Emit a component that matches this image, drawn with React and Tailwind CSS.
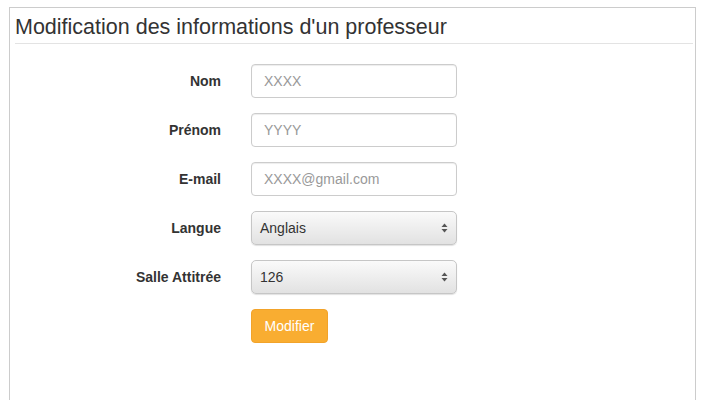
import React from "react";

function Arrows() {
  return (
    <svg width="7" height="12" viewBox="0 0 7 12" className="shrink-0">
      <path d="M3.5 1.5 L6.5 5 L0.5 5 Z" fill="#555" />
      <path d="M3.5 10.5 L6.5 7 L0.5 7 Z" fill="#555" />
    </svg>
  );
}

function Row({ label, children }) {
  return (
    <div className="flex items-center">
      <label className="w-[211px] text-right text-[14px] font-bold text-[#333]">{label}</label>
      <div className="ml-[30px]">{children}</div>
    </div>
  );
}

function TextInput({ placeholder }) {
  return (
    <input
      type="text"
      placeholder={placeholder}
      className="block h-[34px] w-[206px] rounded-[4px] border border-[#ccc] bg-white px-[12px] text-[14px] text-[#555] shadow-[inset_0_1px_1px_rgba(0,0,0,0.075)] outline-none placeholder:text-[#999]"
    />
  );
}

function FakeSelect({ value }) {
  return (
    <div className="flex h-[34px] w-[206px] items-center justify-between rounded-[5px] border border-[#c6c6c6] bg-linear-to-b from-[#fafafa] to-[#e2e2e2] pl-[8px] pr-[8px] text-[14px] text-[#333] shadow-[0_1px_1px_rgba(0,0,0,0.12)]">
      <span>{value}</span>
      <Arrows />
    </div>
  );
}

export default function App() {
  return (
    <div className="h-[400px] w-[702px] overflow-hidden bg-white font-['Liberation_Sans',Arial,Helvetica,sans-serif]">
      <div className="ml-[9px] mt-[7px] h-[420px] w-[687px] border border-[#cccccc]">
        <div className="ml-[5px] mr-[2px] border-b border-[#e3e3e3] pt-[8px] pb-[4px]">
          <h3 className="text-[21.5px] leading-[23px] text-[#333]">Modification des informations d'un professeur</h3>
        </div>
        <form className="mt-[20px] flex flex-col gap-[15px]">
          <Row label="Nom">
            <TextInput placeholder="XXXX" />
          </Row>
          <Row label="Prénom">
            <TextInput placeholder="YYYY" />
          </Row>
          <Row label="E-mail">
            <TextInput placeholder="XXXX@gmail.com" />
          </Row>
          <Row label="Langue">
            <FakeSelect value="Anglais" />
          </Row>
          <Row label="Salle Attitrée">
            <FakeSelect value="126" />
          </Row>
          <Row label="">
            <button
              type="button"
              className="h-[34px] w-[77px] rounded-[4px] border border-[#f2a32a] bg-[#f9ad31] text-[14px] text-white"
            >
              Modifier
            </button>
          </Row>
        </form>
      </div>
    </div>
  );
}
